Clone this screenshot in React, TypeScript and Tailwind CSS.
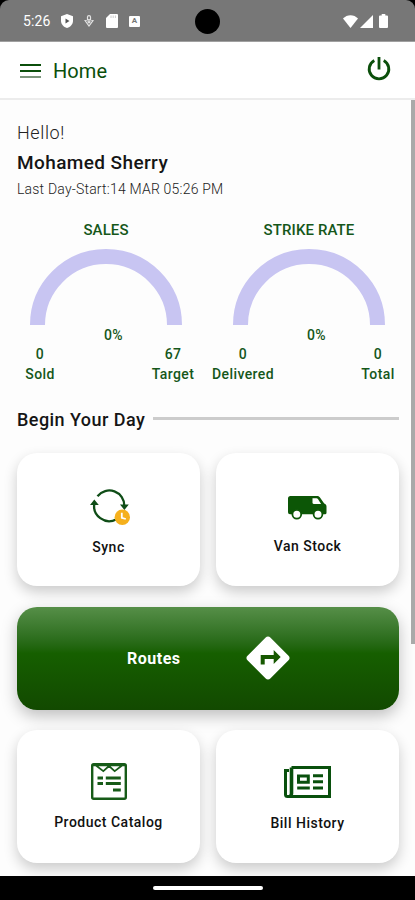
import { ReactNode } from 'react';

function StatusBar() {
    return (
        <div className="h-[42px] shrink-0 bg-black">
            <div className="grid h-full grid-cols-[195px_25px_1fr] items-center rounded-t-[9px] border-b border-[#a0a0a0] bg-[#777777] pt-px pr-[27px] text-white">
                <div className="flex items-center pl-[23px]">
                    <span className="w-[37px] text-[14px] tracking-[0.1px] whitespace-nowrap">
                        5:26
                    </span>
                    <svg className="ml-px h-[14px] w-3" viewBox="0 0 12 14">
                        <path
                            d="M6 0 0 2.2v4.6C0 10.2 2.5 13 6 14c3.500-1 6-3.800 6-7.200V2.200z"
                            fill="#fff"
                        />
                        <path d="m4.500 4.500 4 2.500-4 2.500z" fill="#555" />
                    </svg>
                    <svg
                        className="ml-[11px] h-3 w-[10px]"
                        viewBox="0 0 10 12"
                        fill="none"
                        stroke="#e4e4e4"
                        strokeWidth="1.200">
                        <path d="M3.500 5V2c0-1.800 3-1.800 3 0v3M1 5.500 5 11l4-5.500-4-1z" />
                        <circle cx="5" cy="6.800" r="1" />
                    </svg>
                    <svg className="ml-[12px] h-[14px] w-3" viewBox="0 0 12 14">
                        <path
                            d="M4 0h7a1 1 0 0 1 1 1v12a1 1 0 0 1-1 1H1a1 1 0 0 1-1-1V4z"
                            fill="#fff"
                        />
                        <path d="M5 1.500v2.500M7.200 1.500v2.500M9.400 1.500v2.500" stroke="#ccc" />
                    </svg>
                    <span className="ml-[11px] flex h-[11px] w-[11px] items-center justify-center rounded-[1px] bg-white text-[8px] font-bold text-[#777777]">
                        A
                    </span>
                </div>

                <span className="size-[25px] rounded-full bg-black" />

                <div className="flex items-center justify-end">
                    <svg className="h-[13px] w-[15px]" viewBox="0 0 15 13" fill="#fff">
                        <path d="M7.500 13 0 3.500C4-1 11-1 15 3.500z" />
                    </svg>
                    <svg
                        className="ml-[2px] h-[13px] w-[13px]"
                        viewBox="0 0 13 13"
                        fill="#fff">
                        <path d="M13 0v13H0z" />
                    </svg>
                    <svg
                        className="ml-[6px] h-[14px] w-[9px]"
                        viewBox="0 0 9 14"
                        fill="#fff">
                        <path d="M2.700 0h3.600v1.500H8a1 1 0 0 1 1 1V13a1 1 0 0 1-1 1H1a1 1 0 0 1-1-1V2.500a1 1 0 0 1 1-1h1.700z" />
                    </svg>
                </div>
            </div>
        </div>
    );
}

function Header() {
    return (
        <header className="flex h-[58px] shrink-0 items-center justify-between border-b-2 border-[#ececec] bg-white pt-px pr-[24px] pl-5 text-[#0b4f0b]">
            <div className="flex items-center gap-3">
                <div className="flex w-[21px] flex-col gap-1">
                    <span className="h-[2px] bg-[#0b4f0b]" />
                    <span className="h-[2px] bg-[#0b4f0b]" />
                    <span className="h-[2px] bg-[#7d967d]" />
                </div>
                <h1 className="text-[20px] tracking-[0.1px]">Home</h1>
            </div>
            <svg
                className="-mt-1 size-6"
                viewBox="0 0 24 24"
                fill="none"
                stroke="currentColor"
                strokeWidth="2.800">
                <path d="M7.300 3.400a9.800 9.800 0 1 0 9.400 0M12 0v12.500" />
            </svg>
        </header>
    );
}

interface GaugeProps {
    title: string;
    left: [string, string];
    right: [string, string];
    legendWidth: string;
}

function Gauge({ title, left, right, legendWidth }: GaugeProps) {
    return (
        <section className="flex w-[203px] flex-col items-center text-[14px] font-medium tracking-[0.4px] text-[#15571a]">
            <h2 className="text-[15px] leading-5 tracking-[0.1px]">{title}</h2>
            <svg
                className="mt-[9px] h-[76px] w-[152px]"
                viewBox="0 0 152 76"
                fill="none">
                <path
                    d="M7.500 76a68.500 68.500 0 0 1 137 0"
                    stroke="#c8c5f2"
                    strokeWidth="15"
                />
            </svg>
            <span className="pl-[15px] leading-5 tracking-[0.3px]">0%</span>
            <div
                className={`-mt-px flex justify-between self-start text-center leading-5 ${legendWidth}`}>
                {[left, right].map(([value, label]) => (
                    <div key={label} className="w-[71px]">
                        <p>{value}</p>
                        <p>{label}</p>
                    </div>
                ))}
            </div>
        </section>
    );
}

interface TileProps {
    children: ReactNode;
    label: string;
}

function Tile({ children, label }: TileProps) {
    return (
        <button className="flex h-[133px] flex-col items-center rounded-[20px] bg-white text-[14px] font-medium tracking-[0.5px] text-[#111] shadow-[0_6px_14px_rgba(0,0,0,0.2)]">
            {children}
            <span className="leading-5">{label}</span>
        </button>
    );
}

function SyncIcon() {
    return (
        <svg className="mt-[35px] mb-[11px] ml-[2px] h-[38px] w-10" viewBox="0 0 40 38">
            <g fill="none" stroke="#0f4d17" strokeWidth="2.300">
                <path d="M7.500 8.200A15 15 0 0 1 34.300 18" />
                <path d="M4.500 15a15 15 0 0 0 22 16.200" />
            </g>
            <path d="m4.300 11.500 4.500 5.500H0zM30 16.500h8.800l-4.400 5.500z" fill="#0f4d17" />
            <circle cx="32.300" cy="29.300" r="7.700" fill="#f5b01c" />
            <path
                d="M31.800 24.800v5l4 1.200"
                fill="none"
                stroke="#fff"
                strokeWidth="1.800"
            />
        </svg>
    );
}

function VanIcon() {
    return (
        <svg className="mt-[43px] mb-4 h-6 w-[39px]" viewBox="0 0 39 24">
            <path
                d="M2.500 0H29c1.200 0 2 .4 2.800 1.300l4.400 6.200c1.600.7 2.300 1.500 2.300 3v6.300a1.500 1.500 0 0 1-1.500 1.500H2a2 2 0 0 1-2-2V2.500A2.500 2.500 0 0 1 2.500 0z"
                fill="#0c5606"
            />
            <path d="M24.500 2.300h4c.7 0 1 .2 1.400.7l3.200 5h-7a1.600 1.600 0 0 1-1.600-1.600z" fill="#fff" />
            <g fill="#fff" stroke="#0c5606" strokeWidth="1.800">
                <circle cx="8.800" cy="18.200" r="4.400" />
                <circle cx="30" cy="18.200" r="4.400" />
            </g>
        </svg>
    );
}

function CatalogIcon() {
    return (
        <svg
            className="mt-[33px] mb-3 h-[37px] w-9"
            viewBox="0 0 36 37"
            fill="none"
            stroke="#175b18"
            strokeWidth="2.400">
            <rect x="1.200" y="1.300" width="33.600" height="34.400" rx="1.500" />
            <path d="M1.500 2.500h33M5 2.500l7.300 5.700L18 3l5.700 5.200L31 2.500" strokeWidth="1.700" />
            <path
                d="M6.500 15H12M14.800 15h15M6.500 20.500H12M14.800 20.500h15M22 27h7.800"
                strokeWidth="2.800"
            />
        </svg>
    );
}

function BillIcon() {
    return (
        <svg
            className="mt-[36px] mb-[15px] h-8 w-[47px]"
            viewBox="0 0 47 32"
            fill="none"
            stroke="#09500d"
            strokeWidth="3">
            <path d="M7.500 1.500h38v29h-42a2 2 0 0 1-2-2V4.600h3.500" />
            <path d="M7.500 1.400v26c0 2-.5 3.200-2.500 3.200" strokeWidth="3.600" />
            <path d="M14.500 10h9.800v6.200h-9.800zM29 9.700h10M29 15.700h10M13.200 22h12.600M29 22h10" />
        </svg>
    );
}

export default function App() {
    return (
        <div className="flex h-[900px] w-[415px] flex-col overflow-hidden bg-[#fdfdfd] font-[Roboto,sans-serif]">
            <StatusBar />
            <Header />

            <div className="flex min-h-0 flex-1 overflow-hidden">
                <main className="w-[411px] shrink-0 pt-[21px]">
                    <div className="px-[17px] text-[#222]">
                        <p className="text-[18px] leading-6 font-light tracking-[0.6px]">
                            Hello!
                        </p>
                        <p className="mt-1.5 text-[19px] leading-6 font-medium tracking-[0.4px] text-[#151515]">
                            Mohamed Sherry
                        </p>
                        <p className="mt-1 text-[14px] leading-5 font-light tracking-[0.2px]">
                            Last Day-Start:14 MAR 05:26 PM
                        </p>
                    </div>

                    <div className="mt-[21px] flex pl-[4.500px]">
                        <Gauge
                            title="SALES"
                            left={['0', 'Sold']}
                            right={['67', 'Target']}
                            legendWidth="w-[204px]"
                        />
                        <Gauge
                            title="STRIKE RATE"
                            left={['0', 'Delivered']}
                            right={['0', 'Total']}
                            legendWidth="w-[206px]"
                        />
                    </div>

                    <div className="mt-6 flex items-center gap-[8px] pr-3 pl-[17px]">
                        <h2 className="text-[18px] leading-6 font-medium tracking-[0.45px] whitespace-nowrap text-[#151515]">
                            Begin Your Day
                        </h2>
                        <span className="-mt-[3px] h-[3px] flex-1 bg-[#cccccc]" />
                    </div>

                    <div className="mt-[21px] grid grid-cols-2 gap-x-4 gap-y-[20.5px] pr-3 pl-[17px]">
                        <Tile label="Sync">
                            <SyncIcon />
                        </Tile>
                        <Tile label="Van Stock">
                            <VanIcon />
                        </Tile>
                        <button className="col-span-2 flex h-[103px] items-center rounded-[20px] bg-linear-to-b from-[#568f48] via-[#165f00] via-45% to-[#124900] pl-[110px] text-white shadow-[0_6px_16px_rgba(0,0,0,0.25)]">
                            <span className="w-[119px] pt-0.5 text-left text-[16px] font-bold tracking-[0.5px]">
                                Routes
                            </span>
                            <svg className="size-11" viewBox="0 0 44 44">
                                <path
                                    d="M19.700 1.500a3 3 0 0 1 4.600 0l18.200 18.200a3 3 0 0 1 0 4.600L24.300 42.500a3 3 0 0 1-4.600 0L1.500 24.300a3 3 0 0 1 0-4.600z"
                                    fill="#fff"
                                />
                                <path
                                    d="M14.700 28.500V19h13v-5l7 7-7 7v-5h-9v5.500z"
                                    fill="#165800"
                                />
                            </svg>
                        </button>
                        <Tile label="Product Catalog">
                            <CatalogIcon />
                        </Tile>
                        <Tile label="Bill History">
                            <BillIcon />
                        </Tile>
                    </div>
                </main>
                <span className="h-[544px] w-1 bg-[#a9a9a9]" />
            </div>

            <footer className="flex h-6 shrink-0 items-center justify-center bg-black">
                <span className="h-1 w-[110px] rounded-full bg-white" />
            </footer>
        </div>
    );
}
